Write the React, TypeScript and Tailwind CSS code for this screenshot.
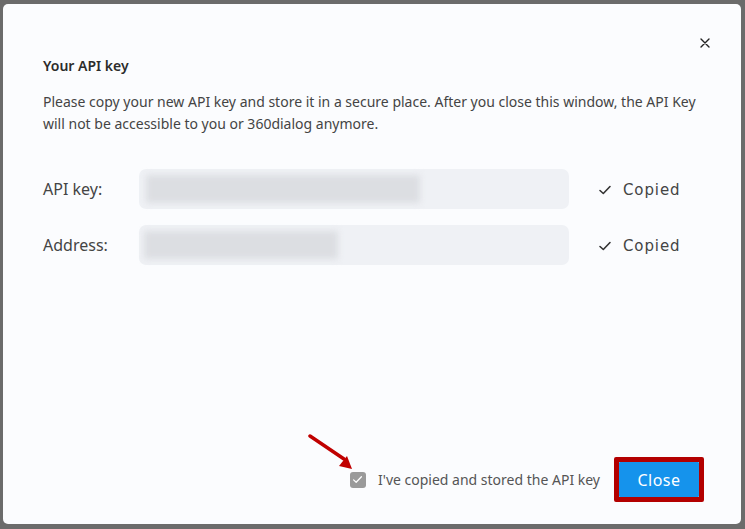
import React from "react";

function Check({ className }: { className?: string }) {
  return (
    <svg viewBox="0 0 14 14" className={className} fill="none" stroke="currentColor" strokeWidth="1.6" strokeLinecap="round" strokeLinejoin="round">
      <path d="M2 7.5 L5.3 10.5 L12 3.5" />
    </svg>
  );
}

export default function App() {
  return (
    <div className="w-[745px] h-[529px] bg-[#6b6b6b] pt-[4px] pl-[3px] pr-[4px] pb-[5px]" style={{ fontFamily: '"Noto Sans", "Open Sans", sans-serif' }}>
      <div className="relative h-full rounded-[5px] bg-[#fbfcfe] flex flex-col text-[#3a3a3a]">
        <button className="absolute right-[27px] top-[30px] w-[18px] h-[18px] flex items-center justify-center text-[#222]">
          <svg viewBox="0 0 10 10" className="w-[10px] h-[10px]" stroke="currentColor" strokeWidth="1.4" strokeLinecap="round">
            <path d="M1 1 L9 9 M9 1 L1 9" />
          </svg>
        </button>
        <div className="pl-[40px] pr-[40px] pt-[52px]">
          <h2 className="text-[14px] font-semibold leading-[20px] text-[#2c2c2c]">Your API key</h2>
          <p className="mt-[15px] text-[14px] leading-[22px] text-[#444]">
            Please copy your new API key and store it in a secure place. After you close this window, the API Key will not be accessible to you or 360dialog anymore.
          </p>
          <div className="mt-[34px] flex flex-col gap-[16px]">
            <div className="flex items-center">
              <span className="w-[96px] text-[16px] text-[#444]">API key:</span>
              <div className="w-[430px] h-[40px] rounded-[7px] bg-[#eff1f5] flex items-center pl-[7px]">
                <div className="w-[274px] h-[28px] bg-[#dcdee2] blur-[3px]" />
              </div>
              <div className="ml-[29px] flex items-center gap-[11px] text-[#333] pt-[2px]">
                <Check className="w-[14px] h-[14px]" />
                <span className="text-[15px] tracking-[0.9px] text-[#444]" style={{ fontFamily: '"DejaVu Sans", sans-serif' }}>Copied</span>
              </div>
            </div>
            <div className="flex items-center">
              <span className="w-[96px] text-[16px] text-[#444]">Address:</span>
              <div className="w-[430px] h-[40px] rounded-[7px] bg-[#eff1f5] flex items-center pl-[5px]">
                <div className="w-[194px] h-[28px] bg-[#dcdee2] blur-[3px]" />
              </div>
              <div className="ml-[29px] flex items-center gap-[11px] text-[#333] pt-[2px]">
                <Check className="w-[14px] h-[14px]" />
                <span className="text-[15px] tracking-[0.9px] text-[#444]" style={{ fontFamily: '"DejaVu Sans", sans-serif' }}>Copied</span>
              </div>
            </div>
          </div>
        </div>
        <div className="mt-auto pb-[22px] pr-[37px] flex items-center justify-end">
          <div className="relative flex items-center gap-[12px]">
            <svg className="absolute left-[-42px] top-[-36px] w-[50px] h-[40px]" viewBox="0 0 50 40">
              <path d="M2 3 L36 26" stroke="#c00000" strokeWidth="3.5" strokeLinecap="round" />
              <path d="M31 33 L44 36 L39 23 Z" fill="#c00000" />
            </svg>
            <span className="w-[16px] h-[16px] rounded-[3px] bg-[#9a9a9a] flex items-center justify-center text-white">
              <Check className="w-[11px] h-[11px]" />
            </span>
            <span className="text-[14px] text-[#555]">I've copied and stored the API key</span>
          </div>
          <div className="ml-[14px] border-[5px] border-[#b30000] rounded-[2px]">
            <button className="w-[80px] h-[35px] bg-[#1593ec] text-white text-[16px] tracking-[0.5px] rounded-[1px]">Close</button>
          </div>
        </div>
      </div>
    </div>
  );
}
